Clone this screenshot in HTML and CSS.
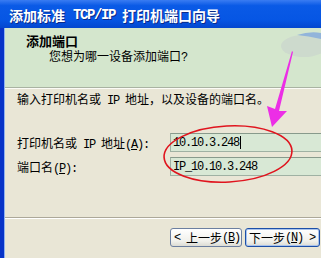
FILE: index.html
```html
<!DOCTYPE html>
<html lang="zh-CN">

<head>
    <meta charset="UTF-8">
    <meta name="viewport" content="width=device-width, initial-scale=1.0">
    <title>添加标准 TCP/IP 打印机端口向导</title>
    <link rel="stylesheet" href="styles.css">
</head>

<body>
    <div class="window">
        <div class="titlebar">添加标准<span class="en pad">TCP/IP</span>打印机端口向导</div>
        <div class="client">
            <!-- 向导头部 -->
            <div class="wizard-head">
                <div class="head-title">添加端口</div>
                <div class="head-sub">您想为哪一设备添加端口<span class="en">?</span></div>
            </div>
            <div class="wizard-body">
                <p class="intro">输入打印机名或<span class="en"> IP </span>地址，以及设备的端口名。</p>
                <div class="fields">
                    <label class="field-label">打印机名或<span class="en"> IP </span>地址<span class="en">(<u>A</u>):</span></label>
                    <div class="field-input"><span class="en">10.10.3.248</span><i class="caret"></i></div>
                    <label class="field-label">端口名<span class="en">(<u>P</u>):</span></label>
                    <div class="field-input"><span class="en">IP_10.10.3.248</span></div>
                </div>
            </div>
            <div class="wizard-foot">
                <button class="btn"><span class="en">&lt; </span>上一步<span class="en">(<u>B</u>)</span></button>
                <button class="btn btn-default">下一步<span class="en">(<u>N</u>) &gt;</span></button>
            </div>
        </div>
        <!-- 标注：箭头和红圈 -->
        <svg class="marks" width="321" height="258" viewBox="0 0 321 258">
            <ellipse cx="304" cy="46" rx="23" ry="11" fill="#cddacd" />
            <path d="M297 35 Q310 31 321 33 L321 39 Q308 36 297 35 Z" fill="#92b4da" />
            <path d="M292 51 L275 109 L267 106 L272 127 L287 111 L279 111 L293 52 Z" fill="#ec2ee6" />
            <ellipse cx="228" cy="154" rx="64" ry="28" fill="none" stroke="#e0141e" stroke-width="1.6" transform="rotate(-3 228 154)" />
        </svg>
    </div>
</body>

</html>
```

FILE: styles.css
```css
body {
    margin: 0;
    font-family: "Liberation Mono", "Noto Sans CJK SC", monospace;
    font-size: 12px;
    color: #000;
}

.window {
    position: relative;
    width: 321px;
    height: 258px;
    overflow: hidden;
    background-color: #0733c8;
    display: flex;
    flex-direction: column;
}

.en {
    letter-spacing: -1.2px;
    white-space: pre;
}

.titlebar {
    height: 28px;
    display: flex;
    align-items: center;
    padding-left: 9px;
    padding-top: 1px;
    box-sizing: border-box;
    color: #fff;
    font-size: 14px;
    font-weight: bold;
    white-space: nowrap;
    background: linear-gradient(#3a7cf2, #0a5ae6 20%, #0656e4 70%, #0447cf);
    text-shadow: 1px 1px 0 #0a2a8a;
}

.titlebar .pad {
    letter-spacing: -1.4px;
    margin: 0 7px 0 8px;
}

.client {
    flex: 1;
    margin-left: 4px;
    border-left: 1px solid #8eb2f0;
    background-color: #e9e6d6;
    display: flex;
    flex-direction: column;
    overflow: hidden;
}

.wizard-head {
    height: 60px;
    box-sizing: border-box;
    padding: 8px 0 0 21px;
    background-color: #d4e6cd;
    border-bottom: 1px solid #a9b3a2;
    box-shadow: 0 1px 0 #fbfbf6;
    line-height: 14px;
}

.head-title {
    font-weight: bold;
    font-size: 13px;
}

.head-sub {
    margin-top: 1px;
    padding-left: 23px;
}

.wizard-body {
    flex: 1;
    padding: 6px 0 0 12px;
}

.intro {
    margin: 0;
    line-height: 14px;
    white-space: nowrap;
}

.fields {
    display: grid;
    grid-template-columns: 153px 170px;
    row-gap: 5px;
    margin-top: 25px;
    align-items: center;
}

.field-label {
    white-space: nowrap;
}

.field-input {
    height: 19px;
    box-sizing: border-box;
    border: 1px solid #9fb1a3;
    border-top-color: #889a8c;
    background-color: #d8e8d5;
    padding-left: 2px;
    display: flex;
    align-items: center;
}

.caret {
    display: inline-block;
    width: 1px;
    height: 13px;
    margin-left: 1px;
    background-color: #000;
}

.wizard-foot {
    height: 41px;
    box-sizing: border-box;
    border-top: 1px solid #aca899;
    box-shadow: inset 0 1px 0 #fff;
    padding: 10px 1px 0 0;
    display: flex;
    justify-content: flex-end;
    align-items: flex-start;
    gap: 3px;
}

.btn {
    height: 19px;
    padding: 0 3px;
    font-family: inherit;
    font-size: 12px;
    color: #000;
    border: 1px solid #6c7fa0;
    border-radius: 3px;
    background: linear-gradient(#ffffff, #f1f1ec 70%, #dcdcd4);
    white-space: nowrap;
    display: flex;
    align-items: center;
}

.btn:first-child {
    width: 72px;
}

.btn-default {
    width: 75px;
    border-color: #1c4fa8;
    box-shadow: inset 0 0 0 1px #a9c3ec;
}

.marks {
    position: absolute;
    left: 0;
    top: 0;
    pointer-events: none;
}
```
